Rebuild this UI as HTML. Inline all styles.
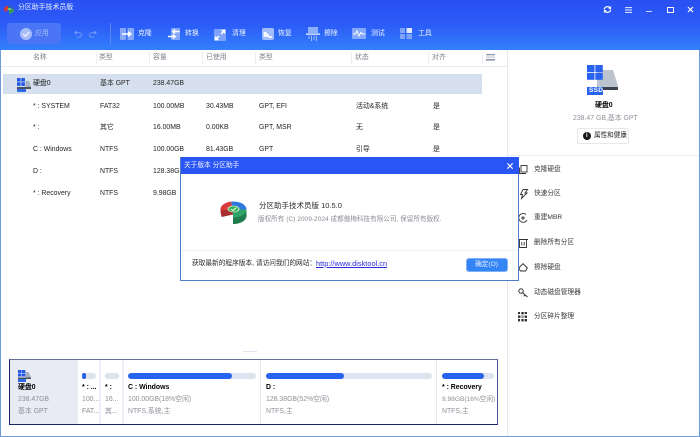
<!DOCTYPE html>
<html lang="zh"><head><meta charset="utf-8">
<style>
html,body{margin:0;padding:0;width:700px;height:437px;overflow:hidden;background:#fff}
#r{position:absolute;left:0;top:0;width:700px;height:437px;overflow:hidden;font-family:"Liberation Sans","Noto Sans CJK SC",sans-serif;font-size:6.9px;color:#262626;filter:blur(.25px)}
.a{position:absolute;white-space:nowrap;line-height:10px}
.b{position:absolute}
.w{color:#eef3ff}
.h{color:#7c818a}
.g{color:#8c9098}
.k{color:#000;font-weight:bold}
svg{position:absolute;overflow:visible}
</style></head><body><div id="r">
<!-- header -->
<div class="b" style="left:0;top:0;width:700px;height:50px;background:linear-gradient(180deg,#2a50f2 0%,#2c5cf8 50%,#3380fa 100%)"></div>
<!-- window border -->
<div class="b" style="left:0;top:50px;width:1px;height:387px;background:#6f9bd8"></div>
<div class="b" style="right:0;top:50px;width:1px;height:387px;background:#6f9bd8"></div>
<div class="b" style="left:0;top:436px;width:700px;height:1px;background:#6f9bd8"></div>
<!-- logo -->
<svg style="left:4px;top:4.5px" width="10" height="9" viewBox="0 0 10 9">
<path d="M0 4.5A5 4 0 0 1 4 .5L5 4.5L1 7Z" fill="#d8343a"/><path d="M3.5 .5A5 4 0 0 1 10 4L5 4.5Z" fill="#2b5fb8"/><path d="M5 4.5L10 4Q10.5 8 6 8.7L5 8.7Z" fill="#3a9a5b"/><ellipse cx="5.5" cy="4" rx="2" ry="1" fill="#6fd06f"/></svg>
<div class="a w" style="left:18px;top:3px">分区助手技术员版</div>
<!-- apply -->
<div class="b" style="left:7px;top:23px;width:54px;height:21px;border-radius:3px;background:#4a75f5"></div>
<div class="b" style="left:20px;top:28px;width:12px;height:12px;border-radius:50%;background:#a8bdf8"></div>
<svg style="left:20px;top:28px" width="12" height="12"><path d="M3 6L5.3 8.3L9 4" fill="none" stroke="#e5ecff" stroke-width="1.5"/></svg>
<div class="a" style="left:35px;top:28.5px;color:#a8bdf8">应用</div>
<!-- undo/redo -->
<svg style="left:74px;top:30px" width="8" height="8" viewBox="0 0 9 9"><path d="M1 3H6A2.3 2.3 0 0 1 6 8H3M3 1L1 3L3 5" fill="none" stroke="#7f9ff8" stroke-width="1"/></svg>
<svg style="left:89px;top:30px" width="8" height="8" viewBox="0 0 9 9"><path d="M8 3H3A2.3 2.3 0 0 0 3 8H6M6 1L8 3L6 5" fill="none" stroke="#7f9ff8" stroke-width="1"/></svg>
<div class="b" style="left:110px;top:23px;width:1px;height:21px;background:#5f86f5"></div>
<!-- clone -->
<svg style="left:120px;top:28px" width="14" height="12"><rect width="6" height="12" rx="1" fill="#86a8fa"/><rect x="7.5" width="6.5" height="12" rx="1" fill="#86a8fa"/><path d="M2 6H10.5M8 3.8L10.8 6L8 8.2" fill="none" stroke="#fff" stroke-width="1.6"/></svg>
<div class="a w" style="left:138px;top:28.5px">克隆</div>
<!-- convert -->
<svg style="left:168px;top:28px" width="12" height="12"><rect x="3" width="9" height="12" rx="1" fill="#86a8fa"/><path d="M11.5 3.5H5M7 1.5L4.8 3.5L7 5.5M0 8.5H7M5 6.5L7.2 8.5L5 10.5" fill="none" stroke="#fff" stroke-width="1.4"/></svg>
<div class="a w" style="left:185px;top:28.5px">转换</div>
<!-- clean -->
<svg style="left:214px;top:28.5px" width="12" height="12"><rect width="12" height="12" rx="1" fill="#7fa3fa"/><path d="M1.5 10.5L5 7M1.5 7.5V10.5H4.5M10.5 1.5L7 5M7.5 1.5H10.5V4.5" fill="none" stroke="#fff" stroke-width="1.5"/></svg>
<div class="a w" style="left:232px;top:28.5px">清理</div>
<!-- restore -->
<svg style="left:262px;top:28px" width="12" height="12"><rect width="12" height="12" rx="2" fill="#a3bdfb"/><path d="M2.5 4V8H6.5M3 4.5L7.5 9L10 9" fill="none" stroke="#fff" stroke-width="1.6"/></svg>
<div class="a w" style="left:278px;top:28.5px">恢复</div>
<!-- wipe -->
<svg style="left:306px;top:27px" width="14" height="14"><rect x="2" y="0" width="10" height="6" fill="#8fb0fa"/><rect x="0" y="6.5" width="14" height="1.2" fill="#fff"/><path d="M3 8.5V12M5.5 8.5V14M8 8.5V13M10.5 8.5V14" stroke="#a9c2fb" stroke-width=".9"/></svg>
<div class="a w" style="left:324px;top:28.5px">擦除</div>
<!-- test -->
<svg style="left:352px;top:28px" width="14" height="11"><rect width="14" height="11" rx="1" fill="#86a8fa"/><path d="M1 6H3.5L5 3L7 8L9 4.5L10.5 6H13" fill="none" stroke="#fff" stroke-width="1"/></svg>
<div class="a w" style="left:371px;top:28.5px">测试</div>
<!-- tools -->
<svg style="left:400px;top:28px" width="12" height="11"><rect width="5" height="5" fill="#7fa3fa"/><rect x="6.5" width="5.5" height="5" fill="#dfe8ff"/><rect y="6" width="5" height="5" fill="#7fa3fa"/><rect x="6.5" y="6" width="5.5" height="5" fill="#7fa3fa"/></svg>
<div class="a w" style="left:418px;top:28.5px">工具</div>
<!-- window controls -->
<svg style="left:603px;top:5px" width="9" height="9" viewBox="0 0 10 10"><path d="M1.5 5A3.5 3.5 0 0 1 8 3.5M8.5 5A3.5 3.5 0 0 1 2 6.5" fill="none" stroke="#fff" stroke-width="1.4"/><path d="M9 1V4.5H6M1 9V5.5H4" fill="#fff"/></svg>
<svg style="left:625px;top:6.5px" width="7" height="6"><path d="M0 .6H7M0 3H7M0 5.4H7" stroke="#e8efff" stroke-width="1"/></svg>
<div class="b" style="left:646px;top:10.5px;width:6px;height:1px;background:#c8d6fc"></div>
<div class="b" style="left:667px;top:6.5px;width:4.5px;height:4.5px;border:1px solid #fff"></div>
<svg style="left:688px;top:7px" width="5" height="5"><path d="M0 0L5 5M5 0L0 5" stroke="#fff" stroke-width="1.2"/></svg>

<!-- table header -->
<div class="a h" style="left:33px;top:52.5px">名称</div>
<div class="a h" style="left:99px;top:52.5px">类型</div>
<div class="a h" style="left:153px;top:52.5px">容量</div>
<div class="a h" style="left:206px;top:52.5px">已使用</div>
<div class="a h" style="left:259px;top:52.5px">类型</div>
<div class="a h" style="left:355px;top:52.5px">状态</div>
<div class="a h" style="left:432px;top:52.5px">对齐</div>
<div class="b" style="left:96px;top:52px;width:1px;height:12px;background:#eceef2"></div>
<div class="b" style="left:149px;top:52px;width:1px;height:12px;background:#eceef2"></div>
<div class="b" style="left:202px;top:52px;width:1px;height:12px;background:#eceef2"></div>
<div class="b" style="left:255px;top:52px;width:1px;height:12px;background:#eceef2"></div>
<div class="b" style="left:351px;top:52px;width:1px;height:12px;background:#eceef2"></div>
<div class="b" style="left:428px;top:52px;width:1px;height:12px;background:#eceef2"></div>
<div class="b" style="left:482px;top:52px;width:1px;height:12px;background:#eceef2"></div>
<svg style="left:486px;top:54px" width="9" height="7"><rect width="9" height="1.3" fill="#8d98ab"/><rect y="2.6" width="9" height="1" fill="#b5bdca"/><rect y="5" width="9" height="1.6" fill="#8d98ab"/></svg>
<div class="b" style="left:1px;top:66px;width:506px;height:1px;background:#e6eaf3"></div>
<div class="b" style="left:507px;top:50px;width:1px;height:386px;background:#e6e9f2"></div>

<!-- selected row -->
<div class="b" style="left:3px;top:74px;width:479px;height:20px;background:#d5dfed"></div>
<svg style="left:17px;top:78px" width="14" height="14"><rect width="3.6" height="3.6" fill="#2458e8"/><rect x="4.3" width="3.6" height="3.6" fill="#2458e8"/><rect y="4.3" width="3.6" height="3.6" fill="#2458e8"/><rect x="4.3" y="4.3" width="3.6" height="3.6" fill="#2458e8"/><path d="M8.5 3H12L14 9H8.5Z" fill="#a5afc0"/><rect y="9" width="14" height="2" fill="#4a5260"/><rect y="11" width="9" height="3" fill="#2f6be6"/></svg>
<div class="a" style="left:33px;top:79px;color:#111">硬盘0</div>
<div class="a" style="left:100px;top:79px">基本 GPT</div>
<div class="a" style="left:153px;top:79px">238.47GB</div>

<!-- rows -->
<div class="a" style="left:33px;top:101.5px">* : SYSTEM</div><div class="a" style="left:100px;top:101.5px">FAT32</div><div class="a" style="left:153px;top:101.5px">100.00MB</div><div class="a" style="left:206px;top:101.5px">30.43MB</div><div class="a" style="left:259px;top:101.5px">GPT, EFI</div><div class="a" style="left:356px;top:101.5px">活动&amp;系统</div><div class="a" style="left:433px;top:101.5px">是</div>
<div class="a" style="left:33px;top:123px">* :</div><div class="a" style="left:100px;top:123px">其它</div><div class="a" style="left:153px;top:123px">16.00MB</div><div class="a" style="left:206px;top:123px">0.00KB</div><div class="a" style="left:259px;top:123px">GPT, MSR</div><div class="a" style="left:356px;top:123px">无</div><div class="a" style="left:433px;top:123px">是</div>
<div class="a" style="left:33px;top:145px">C : Windows</div><div class="a" style="left:100px;top:145px">NTFS</div><div class="a" style="left:153px;top:145px">100.00GB</div><div class="a" style="left:206px;top:145px">81.43GB</div><div class="a" style="left:259px;top:145px">GPT</div><div class="a" style="left:356px;top:145px">引导</div><div class="a" style="left:433px;top:145px">是</div>
<div class="a" style="left:33px;top:167px">D :</div><div class="a" style="left:100px;top:167px">NTFS</div><div class="a" style="left:153px;top:167px">128.38GB</div>
<div class="a" style="left:33px;top:189px">* : Recovery</div><div class="a" style="left:100px;top:189px">NTFS</div><div class="a" style="left:153px;top:189px">9.98GB</div>

<!-- right panel -->
<svg style="left:587px;top:65px" width="32" height="30"><path d="M10 5H26L31 21V22H10Z" fill="#bcc4d0"/><rect x="10" y="22" width="21" height="3" fill="#3c4452"/><rect x="0" y="0" width="7.5" height="7" fill="#2a62f0"/><rect x="8.3" y="0" width="7.5" height="7" fill="#2a62f0"/><rect x="0" y="7.8" width="7.5" height="7" fill="#2a62f0"/><rect x="8.3" y="7.8" width="7.5" height="7" fill="#2a62f0"/><rect x="0" y="22" width="16" height="8" fill="#2a62f0"/></svg>
<div class="a" style="left:589px;top:86px;color:#fff;font-size:6.5px;font-weight:bold;letter-spacing:.3px">SSD</div>
<div class="a k" style="left:595px;top:101px">硬盘0</div>
<div class="a g" style="left:573px;top:114px">238.47 GB,基本 GPT</div>
<div class="b" style="left:577px;top:128px;width:52px;height:16px;border:1px solid #e5e8ef;border-radius:2px;box-sizing:border-box"></div>
<div class="b" style="left:583px;top:132px;width:8px;height:8px;border-radius:50%;background:#1a1a1a"></div>
<div class="a" style="left:586px;top:131px;color:#fff;font-size:6px;font-weight:bold">i</div>
<div class="a" style="left:594px;top:131px;color:#222;font-size:6.6px">属性和健康</div>
<div class="b" style="left:508px;top:155px;width:191px;height:1px;background:#e8ebf5"></div>

<div class="a" style="left:534px;top:165px;color:#3a3a3a;font-size:6.7px">克隆硬盘</div>
<div class="a" style="left:534px;top:189px;color:#3a3a3a;font-size:6.7px">快速分区</div>
<div class="a" style="left:534px;top:213px;color:#3a3a3a;font-size:6.7px">重建MBR</div>
<div class="a" style="left:534px;top:238px;color:#3a3a3a;font-size:6.7px">删除所有分区</div>
<div class="a" style="left:534px;top:263px;color:#3a3a3a;font-size:6.7px">擦除硬盘</div>
<div class="a" style="left:534px;top:288px;color:#3a3a3a;font-size:6.7px">动态磁盘管理器</div>
<div class="a" style="left:534px;top:312px;color:#3a3a3a;font-size:6.7px">分区碎片整理</div>
<svg style="left:519px;top:165px" width="9" height="9" fill="none" stroke="#333" stroke-width=".9"><rect x="2" y=".5" width="6" height="6.5"/><path d="M.5 2.5V8.5H7"/></svg>
<svg style="left:519px;top:189px" width="9" height="10" fill="none" stroke="#333" stroke-width=".9"><path d="M4 .5H8.5L6 4H8L2.5 9.5L3.5 5.5H1.5Z"/></svg>
<svg style="left:518px;top:213px" width="10" height="10" fill="none" stroke="#333" stroke-width=".9"><path d="M8 1.5A4.4 4.4 0 1 0 9 7M3 5H7M5 3V7"/></svg>
<svg style="left:518px;top:238px" width="10" height="10" fill="none" stroke="#333" stroke-width=".9"><path d="M0 1.5H10M1.5 1.5V9.5H8.5V1.5M3.8 4V7.5M6.2 4V7.5"/></svg>
<svg style="left:518px;top:263px" width="10" height="9" fill="none" stroke="#333" stroke-width="1"><path d="M.7 5L5 .7L9.3 5L7.5 8H2.5Z"/></svg>
<svg style="left:518px;top:288px" width="10" height="10" fill="none" stroke="#333" stroke-width="1"><circle cx="3" cy="3" r="2.2"/><path d="M4.7 4.7L9.5 9M7 7L5.7 8.3"/></svg>
<svg style="left:518px;top:312px" width="9" height="10" fill="#333"><rect x="3.3" y="0" width="2.4" height="2.4"/><rect x="0" y="3.5" width="2.4" height="2.4"/><rect x="3.3" y="3.5" width="2.4" height="2.4" fill="#888"/><rect x="6.6" y="3.5" width="2.4" height="2.4"/><rect x="3.3" y="7" width="2.4" height="2.4"/><rect x="0" y="7" width="2" height="2.4"/><rect x="6.6" y="7" width="2.4" height="2.4"/><rect x="0" y="0" width="2" height="2"/><rect x="6.6" y="0" width="2.4" height="2"/></svg>

<!-- bottom disk map -->
<div class="b" style="left:243px;top:351px;width:14px;height:1px;background:#dfe3ee"></div>
<div class="b" style="left:9px;top:359px;width:489px;height:66px;border:1px solid #1a2266;border-top:1px solid #6a7199;border-right:1px solid #4a5490;box-sizing:border-box;background:#fff"></div>
<div class="b" style="left:10px;top:360px;width:68px;height:64px;background:#e8ebf4"></div>
<div class="b" style="left:99px;top:360px;width:2px;height:64px;background:#eef0f7"></div>
<div class="b" style="left:122px;top:360px;width:2px;height:64px;background:#eef0f7"></div>
<div class="b" style="left:260px;top:360px;width:1px;height:64px;background:#e6e9f3"></div>
<div class="b" style="left:436px;top:360px;width:1px;height:64px;background:#e6e9f3"></div>
<svg style="left:18px;top:370px" width="13" height="12"><rect width="3.4" height="3" fill="#2458e8"/><rect x="3.9" width="3.4" height="3" fill="#2458e8"/><rect y="3.5" width="3.4" height="3" fill="#2458e8"/><rect x="3.9" y="3.5" width="3.4" height="3" fill="#2458e8"/><path d="M7.5 2H10.5L13 7.5H7.5Z" fill="#a5afc0"/><rect y="7.5" width="13" height="1.5" fill="#4a5260"/><rect y="9" width="8" height="3" fill="#2f6be6"/></svg>
<div class="a k" style="left:18px;top:383px">硬盘0</div>
<div class="a g" style="left:18px;top:395px">238.47GB</div>
<div class="a g" style="left:18px;top:407px">基本 GPT</div>

<div class="b" style="left:82px;top:373px;width:14px;height:6px;border-radius:3px;background:#dde4f0"></div>
<div class="b" style="left:82px;top:373px;width:4px;height:6px;border-radius:3px;background:#2763ec"></div>
<div class="a k" style="left:82px;top:383px">* : ...</div>
<div class="a g" style="left:82px;top:395px">100...</div>
<div class="a g" style="left:82px;top:407px">FAT...</div>

<div class="b" style="left:105px;top:373px;width:14px;height:6px;border-radius:3px;background:#dde4f0"></div>
<div class="a k" style="left:105px;top:383px">* :</div>
<div class="a g" style="left:105px;top:395px">16...</div>
<div class="a g" style="left:105px;top:407px">其...</div>

<div class="b" style="left:128px;top:373px;width:128px;height:6px;border-radius:3px;background:#dde4f0"></div>
<div class="b" style="left:128px;top:373px;width:104px;height:6px;border-radius:3px;background:#2763ec"></div>
<div class="a k" style="left:128px;top:383px">C : Windows</div>
<div class="a g" style="left:128px;top:395px">100.00GB(18%空闲)</div>
<div class="a g" style="left:128px;top:407px">NTFS,系统,主</div>

<div class="b" style="left:266px;top:373px;width:166px;height:6px;border-radius:3px;background:#dde4f0"></div>
<div class="b" style="left:266px;top:373px;width:78px;height:6px;border-radius:3px;background:#2763ec"></div>
<div class="a k" style="left:266px;top:383px">D :</div>
<div class="a g" style="left:266px;top:395px">128.38GB(52%空闲)</div>
<div class="a g" style="left:266px;top:407px">NTFS,主</div>

<div class="b" style="left:442px;top:373px;width:52px;height:6px;border-radius:3px;background:#dde4f0"></div>
<div class="b" style="left:442px;top:373px;width:42px;height:6px;border-radius:3px;background:#2763ec"></div>
<div class="a k" style="left:442px;top:383px">* : Recovery</div>
<div class="a g" style="left:442px;top:395px;font-size:6.6px">9.98GB(16%空闲)</div>
<div class="a g" style="left:442px;top:407px">NTFS,主</div>

<!-- dialog -->
<div class="b" style="left:180px;top:157px;width:339px;height:124px;background:#fff;border:1px solid #4f7fc8;box-sizing:border-box"></div>
<div class="b" style="left:181px;top:157px;width:338px;height:17px;background:#2a55f5"></div>
<div class="a" style="left:184px;top:160.5px;color:#eef3ff;font-size:6.7px">关于版本 分区助手</div>
<svg style="left:507px;top:163px" width="6" height="6"><path d="M.3 .3L5.7 5.7M5.7 .3L.3 5.7" stroke="#fff" stroke-width="1.1"/></svg>
<svg style="left:220px;top:200.5px" width="27" height="23" viewBox="0 0 27 23">
<path d="M.5 9L13 9L13 13.5L1.8 16Q.4 13 .5 9Z" fill="#a82c30"/>
<path d="M13 8.5L.5 9.5A13 8 0 0 1 11 .6Z" fill="#d83a3c"/>
<path d="M11 .6A13 8 0 0 1 26.5 8.5L13 8.5Z" fill="#2f78de"/>
<path d="M13 23V16A13 8 0 0 0 26.5 9V15A13 8 0 0 1 13 23Z" fill="#1f7c4e"/>
<path d="M13 8.5L26.5 8.5A13 8 0 0 1 13 16.5Z" fill="#2fa468"/>
<ellipse cx="13.5" cy="8" rx="6" ry="3.4" fill="#c6e6c6"/><ellipse cx="13.5" cy="8" rx="4.8" ry="2.6" fill="#2fb24f"/>
<path d="M11 8L13 9.5L16.3 6.6" fill="none" stroke="#fff" stroke-width="1"/></svg>
<div class="a" style="left:259px;top:201px;color:#2a2a2a;font-size:7.5px">分区助手技术员版 10.5.0</div>
<div class="a" style="left:258px;top:215px;color:#8c9098;font-size:6.6px">版权所有 (C) 2009-2024 成都傲梅科技有限公司, 保留所有版权.</div>
<div class="b" style="left:181px;top:250px;width:337px;height:1px;background:#f2f3f7"></div>
<div class="a" style="left:192px;top:259px;color:#2a2a2a;font-size:6.7px">获取最新的程序版本, 请访问我们的网站：</div>
<div class="a" style="left:316px;top:259px;color:#2b2bdc;font-size:7.4px;text-decoration:underline">http://www.disktool.cn</div>
<div class="b" style="left:466px;top:258px;width:42px;height:14px;background:#3384f5;border-radius:3px;border:1px solid #7fb0f5;box-sizing:border-box"></div>
<div class="a" style="left:475px;top:260px;color:#e8f0ff;font-size:6.7px">确定(O)</div>
</div></body></html>
